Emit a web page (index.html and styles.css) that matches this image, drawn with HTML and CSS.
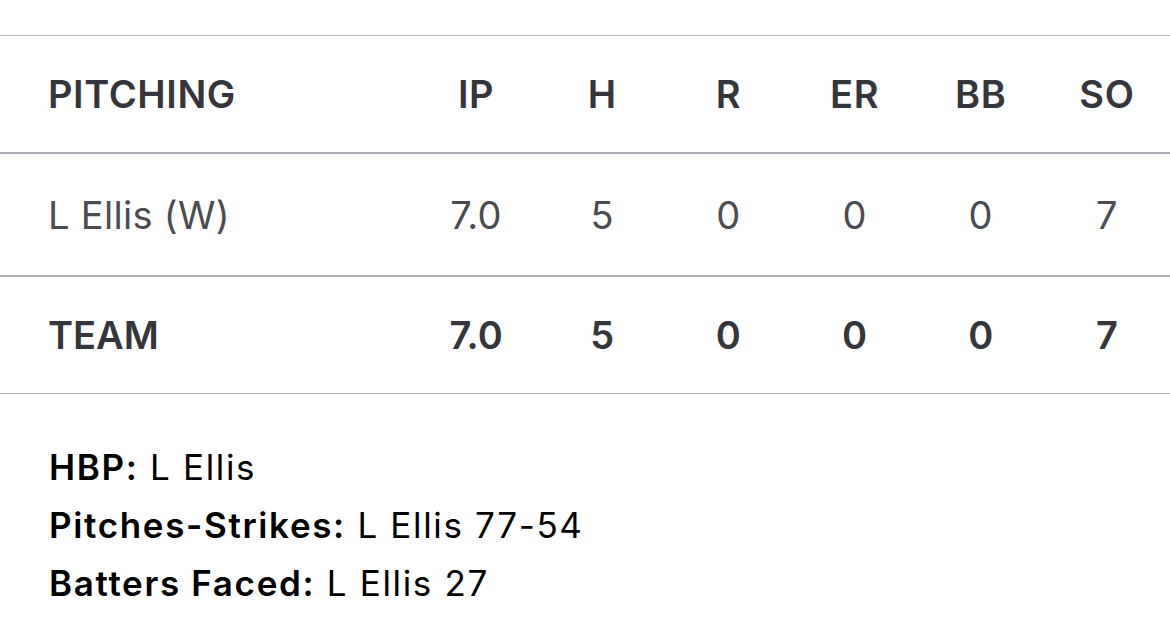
FILE: index.html
```html
<!DOCTYPE html>
<html>
<head>
<meta charset="utf-8">
<link rel="stylesheet" href="styles.css">
</head>
<body>
<div class="box">
  <div class="row head">
    <div class="name">PITCHING</div>
    <div class="c">IP</div><div class="c">H</div><div class="c">R</div><div class="c">ER</div><div class="c">BB</div><div class="c">SO</div>
  </div>
  <div class="row player">
    <div class="name">L Ellis (W)</div>
    <div class="c">7.0</div><div class="c">5</div><div class="c">0</div><div class="c">0</div><div class="c">0</div><div class="c">7</div>
  </div>
  <div class="row team">
    <div class="name">TEAM</div>
    <div class="c">7.0</div><div class="c">5</div><div class="c">0</div><div class="c">0</div><div class="c">0</div><div class="c">7</div>
  </div>
  <div class="notes">
    <p><b>HBP:</b> L Ellis</p>
    <p><b>Pitches-Strikes:</b> L Ellis 77-54</p>
    <p><b>Batters Faced:</b> L Ellis 27</p>
  </div>
</div>
</body>
</html>
```
FILE: styles.css
```css
html, body { margin: 0; padding: 0; background: #fff; }
body { font-family: Inter, "Noto Sans", sans-serif; }
.box { padding-top: 35px; }
.row {
  display: grid;
  grid-template-columns: 413px repeat(6, 1fr);
  align-items: center;
  font-size: 38px;
  color: #45474d;
}
.name { padding-left: 48px; }
.c { text-align: center; }
.head { height: 116px; border-top: 1px solid #b3b6ba; border-bottom: 2px solid #a9b0b7; font-weight: 600; color: #35363b; letter-spacing: 0.6px; }
.player { height: 121px; border-bottom: 2px solid #a9b0b7; font-weight: 400; color: #4a4c52; letter-spacing: 0.3px; }
.team { height: 116px; border-bottom: 1px solid #b3b6ba; font-weight: 600; color: #35363b; }
.notes { padding: 44px 0 0 49px; font-size: 35px; color: #000; letter-spacing: 1.65px; }
.notes p { margin: 0; line-height: 58px; }
.notes b { font-weight: 600; }
```
